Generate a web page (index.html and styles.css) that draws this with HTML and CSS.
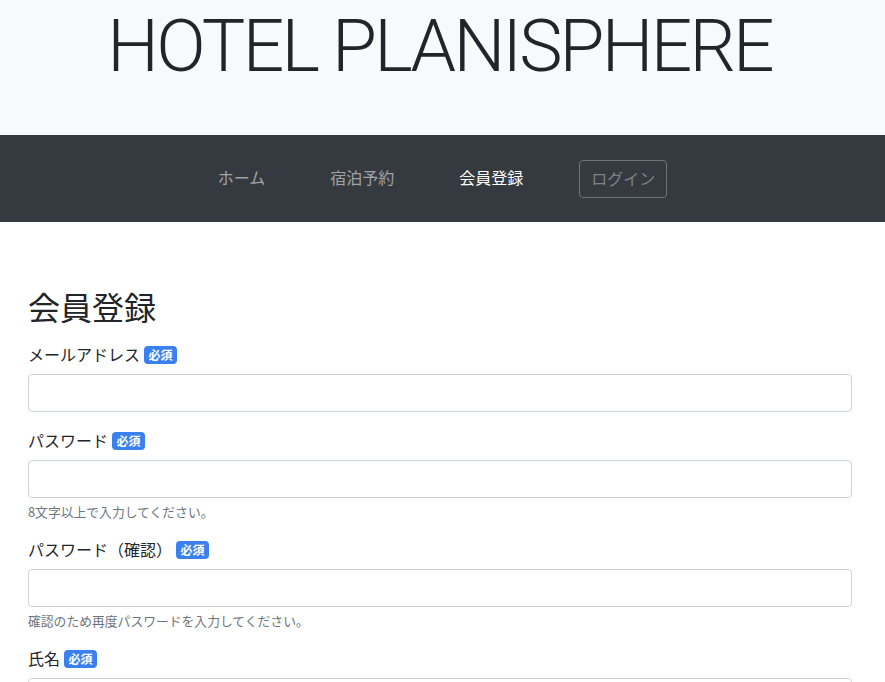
FILE: index.html
```html
<!DOCTYPE html>
<html lang="ja">
<head>
<meta charset="utf-8">
<title>会員登録 | HOTEL PLANISPHERE</title>
<link rel="stylesheet" href="styles.css">
</head>
<body>
<header class="jumbo">
  <h1 class="site-title">HOTEL PLANISPHERE</h1>
</header>
<nav class="navbar">
  <ul class="nav-list">
    <li><a class="nav-link" href="#">ホーム</a></li>
    <li><a class="nav-link" href="#">宿泊予約</a></li>
    <li><a class="nav-link active" href="#">会員登録</a></li>
    <li class="nav-btn-item"><a class="nav-btn" href="#">ログイン</a></li>
  </ul>
</nav>
<main class="content">
  <h2 class="page-title">会員登録</h2>
  <form class="form">
    <div class="form-group">
      <label class="label">メールアドレス <span class="badge">必須</span></label>
      <input class="input" type="email">
    </div>
    <div class="form-group">
      <label class="label">パスワード <span class="badge">必須</span></label>
      <input class="input" type="password">
      <small class="help">8文字以上で入力してください。</small>
    </div>
    <div class="form-group">
      <label class="label">パスワード（確認） <span class="badge">必須</span></label>
      <input class="input" type="password">
      <small class="help">確認のため再度パスワードを入力してください。</small>
    </div>
    <div class="form-group">
      <label class="label">氏名 <span class="badge">必須</span></label>
      <input class="input" type="text">
    </div>
  </form>
</main>
</body>
</html>
```
FILE: styles.css
```css
* { box-sizing: border-box; }
html, body { margin: 0; padding: 0; }
body {
  font-family: "Noto Sans CJK JP", "Noto Sans", sans-serif;
  font-size: 16px;
  line-height: 1.5;
  color: #212529;
  background: #fff;
}
.jumbo {
  background: #f8f9fa;
  height: 135px;
  padding-top: 4px;
  text-align: center;
}
.site-title {
  margin: 0;
  font-family: Roboto, "Liberation Sans", sans-serif;
  font-weight: 300;
  font-size: 73px;
  line-height: 1.17;
  letter-spacing: -2.8px;
  color: #212529;
  padding-right: 6px;
}
.navbar {
  background: #343a40;
  height: 87px;
  display: flex;
  align-items: center;
  justify-content: center;
}
.nav-list {
  list-style: none;
  margin: 0;
  padding: 0;
  display: flex;
  align-items: center;
  gap: 65px;
}
.nav-link {
  display: block;
  color: rgba(255,255,255,0.55);
  text-decoration: none;
  font-size: 16px;
  line-height: 24px;
  padding-bottom: 4px;
}
.nav-link.active { color: #fff; }
.nav-btn-item { margin-left: -9px; }
.nav-btn {
  display: block;
  height: 38px;
  padding: 0 11px 2px;
  border: 1px solid #6c757d;
  border-radius: 4px;
  color: #7d8287;
  text-decoration: none;
  font-size: 16px;
  line-height: 34px;
}
.content {
  padding: 65px 33px 0 28px;
}
.page-title {
  margin: 0 0 17px;
  font-size: 32px;
  font-weight: 400;
  line-height: 38px;
}
.form-group {
  display: flex;
  flex-direction: column;
  align-items: flex-start;
  margin-bottom: 16px;
}
.label {
  display: block;
  line-height: 24px;
  margin-bottom: 8px;
}
.badge {
  display: inline-block;
  background: #3a80f0;
  color: #fff;
  font-size: 12px;
  font-weight: 700;
  line-height: 1;
  padding: 3px 4.8px;
  border-radius: 4px;
  vertical-align: 1px;
}
.input {
  display: block;
  width: 100%;
  height: 38px;
  border: 1px solid #ced4da;
  border-radius: 4px;
  background: #fff;
  font-size: 16px;
  padding: 6px 12px;
}
.help {
  display: block;
  margin-top: 4px;
  font-size: 12.8px;
  line-height: 19.2px;
  color: #6c757d;
}
```
